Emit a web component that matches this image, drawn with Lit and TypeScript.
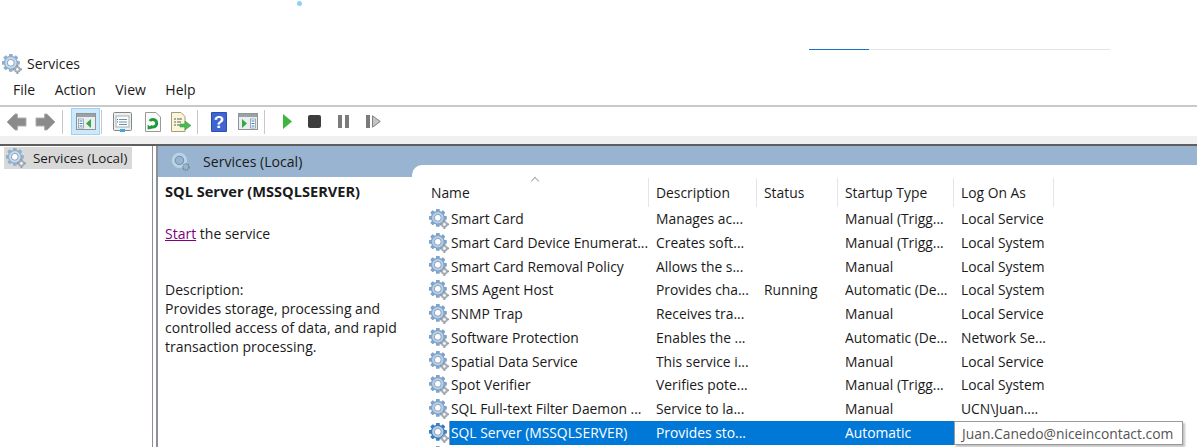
import {LitElement, html, svg, css, TemplateResult} from 'lit';
import {customElement} from 'lit/decorators.js';

const ROWS = [
  ['Smart Card', 'Manages ac...', '', 'Manual (Trigg...', 'Local Service'],
  ['Smart Card Device Enumerat...', 'Creates soft...', '', 'Manual (Trigg...', 'Local System'],
  ['Smart Card Removal Policy', 'Allows the s...', '', 'Manual', 'Local System'],
  ['SMS Agent Host', 'Provides cha...', 'Running', 'Automatic (De...', 'Local System'],
  ['SNMP Trap', 'Receives tra...', '', 'Manual', 'Local Service'],
  ['Software Protection', 'Enables the ...', '', 'Automatic (De...', 'Network Se...'],
  ['Spatial Data Service', 'This service i...', '', 'Manual', 'Local Service'],
  ['Spot Verifier', 'Verifies pote...', '', 'Manual (Trigg...', 'Local System'],
  ['SQL Full-text Filter Daemon ...', 'Service to la...', '', 'Manual', 'UCN\\Juan....'],
  ['SQL Server (MSSQLSERVER)', 'Provides sto...', '', 'Automatic', ''],
  ['', '', '', '', ''],
];

function teeth(cx: number, cy: number, r: number, w: number, n: number, color: string) {
  const out = [];
  for (let i = 0; i < n; i++) {
    const a = (360 / n) * i;
    out.push(svg`<rect x=${cx - w / 2} y=${cy - r} width=${w} height=${r * 2} rx="0.6" fill=${color} transform="rotate(${a} ${cx} ${cy})"/>`);
  }
  return out;
}

// services gear: big blue one plus a small grey one at the lower right
function gear(size: number, dark = '#7fa3c9', light = '#b9cfe6') {
  return html`<svg class="gear" width=${size} height=${size} viewBox="0 0 20 20">
    ${teeth(8.8, 8.8, 8.8, 3.4, 4, dark)}
    ${teeth(8.8, 8.8, 8.8, 3.4, 4, dark).map(t => svg`<g transform="rotate(45 8.8 8.8)">${t}</g>`)}
    <circle cx="8.8" cy="8.8" r="7" fill=${dark}/>
    <circle cx="8.8" cy="8.8" r="5.7" fill=${light}/>
    <circle cx="8.8" cy="8.8" r="3.4" fill="#fff" stroke="#6f8fb5" stroke-width="0.8"/>
    ${teeth(15.4, 15.4, 4.4, 1.6, 4, '#8a949e')}
    <circle cx="15.4" cy="15.4" r="3.2" fill="#a3adb7"/>
    <circle cx="15.4" cy="15.4" r="1.3" fill="#fff"/>
  </svg>`;
}

function paleGear(size: number) {
  return html`<svg class="gear" width=${size} height=${size} viewBox="0 0 20 20">
    <circle cx="8.4" cy="8.4" r="6.2" fill="none" stroke="#bcd3e4" stroke-width="3"/>
    <circle cx="8.4" cy="8.4" r="4.2" fill="none" stroke="#5f86ad" stroke-width="0.8"/>
    <circle cx="15" cy="15" r="3" fill="none" stroke="#72869a" stroke-width="1.6" stroke-dasharray="1.4 0.8"/>
  </svg>`;
}

const arrow = (flip: boolean) => html`<svg width="21" height="18" viewBox="0 0 21 18" style=${flip ? 'transform:scaleX(-1)' : ''}>
  <path d="M1 9 9 1h2.500V5H20v8H11.500v4H9Z" fill="#8b8b8b" stroke="#b0b0b0"/>
</svg>`;

const windowFrame = (inner: TemplateResult) => html`<svg width="20" height="17" viewBox="0 0 20 17">
  <rect x=".5" y=".5" width="19" height="16" fill="#e9eef0" stroke="#8f9596"/>
  <rect x="1" y="1" width="18" height="3" fill="#9aa2a5"/>
  ${inner}
</svg>`;

const ICONS = {
  showTree: windowFrame(html`${svg`<rect x="2.500" y="6" width="5" height="9" fill="#fff" stroke="#7b8d9c" stroke-width=".7"/><path d="M3.500 8h3M3.500 10.500h3M3.500 13h3" stroke="#3b7fc4"/><path d="M15 6v9l-5-4.500Z" fill="#35a846"/>`}`),
  showAction: windowFrame(html`${svg`<path d="M4 6v9l5-4.500Z" fill="#35a846"/><rect x="12.500" y="6" width="5" height="9" fill="#fff" stroke="#7b8d9c" stroke-width=".7"/><path d="M13.500 8h3M13.500 10.500h3M13.500 13h3" stroke="#3b7fc4"/>`}`),
  props: html`<svg width="19" height="20" viewBox="0 0 19 20">
    <rect x=".5" y=".5" width="18" height="18" rx="1" fill="#efefed" stroke="#80878b"/>
    <rect x="3" y="4" width="13" height="11" fill="#fff" stroke="#a7adb0"/>
    <path d="M6 7.500h8M6 10h8M6 12.500h8" stroke="#6b8fb0"/><path d="M4 7.500h1M4 10h1" stroke="#3c6f9c"/>
    <rect x="7" y="17" width="5" height="3" fill="#3fa9dc"/>
  </svg>`,
  refresh: html`<svg width="16" height="20" viewBox="0 0 16 20">
    <path d="M.5.500H11l4.500 4.500v14.500H.5Z" fill="#fbfbfb" stroke="#9a9a9a"/>
    <path d="M4.800 9a3.800 3.800 0 1 1 .5 5" fill="none" stroke="#1e9b3c" stroke-width="3"/>
    <path d="M2.600 12.500 7.500 16.500 2.600 17.500Z" fill="#1e9b3c"/>
  </svg>`,
  exportList: html`<svg width="20" height="20" viewBox="0 0 20 20">
    <path d="M.5.500H10l4 4v15H.5Z" fill="#fbf6d8" stroke="#a69d7c"/>
    <path d="M3 7h2M6 7h5M3 10h2M6 10h4M3 13h2M6 13h3" stroke="#55606b"/>
    <path d="M9 12h5V9l6 4.500-6 4.500v-3H9Z" fill="#4dba56" stroke="#2d9a3d" stroke-width=".5"/>
  </svg>`,
  help: html`<svg width="16" height="20" viewBox="0 0 16 20">
    <rect width="16" height="20" rx="1" fill="#2b4eb4"/><rect x="1" y="1" width="14" height="18" fill="#3f66cf"/>
    <text x="8" y="16" text-anchor="middle" font-family="Liberation Sans, sans-serif" font-weight="700" font-size="17" fill="#fff">?</text>
  </svg>`,
  play: html`<svg width="9" height="15" viewBox="0 0 9 15"><path d="M0 0 9 7.500 0 15Z" fill="#3fb63f"/></svg>`,
  stop: html`<svg width="13" height="13" viewBox="0 0 13 13"><rect width="13" height="13" rx="2" fill="#3d3d3d"/></svg>`,
  pause: html`<svg width="11" height="13" viewBox="0 0 11 13"><path d="M0 0h4v13H0ZM7 0h4v13H7Z" fill="#7b7b7b"/></svg>`,
  resume: html`<svg width="15" height="13" viewBox="0 0 15 13"><path d="M0 0h4v13H0Z" fill="#7b7b7b"/><path d="M6.500.8 14.300 6.500 6.500 12.200Z" fill="#c4c4c4" stroke="#808080"/></svg>`,
};

@customElement('app-root')
export class AppRoot extends LitElement {
  static styles = css`
    :host {
      display: block;
      position: relative;
      width: 1197px;
      height: 447px;
      overflow: hidden;
      background: #fff;
      color: #1a1a1a;
      font-family: "Open Sans", "Noto Sans", sans-serif;
      font-size: 13.85px;
    }
    .gear { display: block; flex: none; }
    .dot {
      position: absolute;
      left: 297px;
      top: 1px;
      width: 5px;
      height: 5px;
      border-radius: 50%;
      background: #8fd0f7;
    }
    .loader {
      position: absolute;
      left: 809px;
      top: 49px;
      width: 301px;
      height: 1px;
      background: #e4e4e4;
    }
    .loader div { width: 60px; height: 1px; background: #1a6fc0; }
    .title {
      display: flex;
      align-items: center;
      gap: 5px;
      height: 21px;
      margin-top: 53px;
      padding-left: 2px;
      font-size: 14px;
    }
    .menu {
      display: flex;
      height: 33px;
      align-items: center;
      padding-left: 13px;
      gap: 19.500px;
      box-sizing: border-box;
      border-bottom: 2px solid #c9c9c9;
      font-size: 14px;
    }
    .toolbar {
      display: flex;
      align-items: center;
      height: 29px;
      padding-left: 6px;
    }
    .toolbar > * { flex: none; }
    .sep { width: 1px; height: 24px; background: #c8c8c8; }
    .active {
      display: flex;
      align-items: center;
      justify-content: center;
      box-sizing: border-box;
      width: 29px;
      height: 27px;
      background: #cde8fb;
      border: 1px solid #9fd3f5;
    }
    .strip {
      height: 8px;
      background: #f0f0f0;
      border-bottom: 2px solid #5f5f5f;
    }
    .panes {
      display: grid;
      grid-template-columns: 153px 1fr;
      height: 300px;
    }
    .tree {
      box-sizing: border-box;
      border-right: 1px solid #8e8e8e;
      padding: 1px 20px 0 4px;
    }
    .node {
      display: flex;
      align-items: center;
      gap: 7px;
      height: 22px;
      padding-left: 2px;
      background: #d9d9d9;
      white-space: nowrap;
      font-size: 13.400px;
    }
    .right {
      display: grid;
      grid-template-columns: 254px 1fr;
      margin-left: 3px;
      border-left: 2px solid #8c9198;
      background: #99b4d1;
    }
    .head {
      display: flex;
      align-items: center;
      gap: 12px;
      height: 31px;
      padding-left: 13px;
      font-size: 14.100px;
    }
    .details {
      display: flex;
      flex-direction: column;
      min-width: 0;
    }
    .body {
      flex: 1;
      background: #fff;
      padding: 5px 0 0 7px;
      line-height: 19px;
      font-size: 14px;
    }
    .body h2 { margin: 0; font-size: 14.600px; font-weight: 700; line-height: 19px; }
    .body p { margin: 23px 0 0; }
    .body p + p { margin-top: 37px; }
    .body a { color: #800080; text-decoration: underline; }
    .list {
      margin-top: 19px;
      padding-top: 13px;
      background: #fff;
      border-top-left-radius: 10px;
      overflow: hidden;
      --cols: 237px 108px 81px 116px 100px;
    }
    .thead, .row {
      display: grid;
      grid-template-columns: var(--cols);
      white-space: nowrap;
    }
    .thead { height: 29px; position: relative; }
    .thead div {
      padding-left: 7px;
      border-right: 1px solid #e5e5e5;
      line-height: 29px;
    }
    .thead div:first-child { padding-left: 19px; }
    .sort {
      position: absolute;
      left: 120px;
      top: 0;
      width: 5px;
      height: 5px;
      transform: rotate(45deg);
      border-left: 1px solid #aaa;
      border-top: 1px solid #aaa;
    }
    .row { height: 23.75px; line-height: 23.75px; }
    .row > div { padding-left: 7px; overflow: hidden; }
    .row .name { display: flex; align-items: center; gap: 2px; padding-left: 17px; }
    .row.sel { color: #fff; }
    .row.sel .name span, .row.sel > div:not(.name) { background: #0078d7; }
    .row.sel .name span {
      flex: 1;
      margin-right: 0;
      box-shadow: inset 1px 0 #8f9aa5;
      padding-left: 2px;
      margin-left: -2px;
    }
    .tip {
      position: absolute;
      left: 954px;
      top: 421px;
      width: 229px;
      height: 24px;
      box-sizing: border-box;
      padding-left: 7px;
      line-height: 23px;
      background: #fff;
      border: 1px solid #9a9a9a;
      box-shadow: 2px 2px 2px rgba(0, 0, 0, 0.25);
      color: #555;
      white-space: nowrap;
    }
  `;

  protected render(): TemplateResult {
    return html`
      <div class="dot"></div>
      <div class="loader"><div></div></div>
      <div class="title">${gear(20, '#8fb0cc', '#c9dbe9')}<span>Services</span></div>
      <nav class="menu"><span>File</span><span>Action</span><span>View</span><span>Help</span></nav>
      <div class="toolbar">
        ${arrow(false)}<span style="width:8px"></span>${arrow(true)}
        <span style="width:6px"></span><div class="sep"></div><span style="width:8px"></span>
        <div class="active">${ICONS.showTree}</div>
        <span style="width:1px"></span><div class="sep"></div><span style="width:11px"></span>
        ${ICONS.props}<span style="width:13px"></span>${ICONS.refresh}<span style="width:10px"></span>${ICONS.exportList}
        <span style="width:6px"></span><div class="sep"></div><span style="width:13px"></span>
        ${ICONS.help}<span style="width:11px"></span>${ICONS.showAction}
        <span style="width:6px"></span><div class="sep"></div><span style="width:18px"></span>
        ${ICONS.play}<span style="width:16px"></span>${ICONS.stop}<span style="width:17px"></span>${ICONS.pause}<span style="width:17px"></span>${ICONS.resume}
      </div>
      <div class="strip"></div>
      <div class="panes">
        <aside class="tree"><div class="node">${gear(20, '#8fb0cc', '#c9dbe9')}<span>Services (Local)</span></div></aside>
        <section class="right">
          <div class="details">
            <div class="head">${paleGear(20)}<span>Services (Local)</span></div>
            <div class="body">
              <h2>SQL Server (MSSQLSERVER)</h2>
              <p><a>Start</a> the service</p>
              <p>Description:<br>Provides storage, processing and<br>controlled access of data, and rapid<br>transaction processing.</p>
            </div>
          </div>
          <div class="list">
            <div class="thead">
              <div>Name</div><div>Description</div><div>Status</div><div>Startup Type</div><div>Log On As</div>
              <i class="sort"></i>
            </div>
            ${ROWS.map((r, i) => html`
              <div class="row ${i === 9 ? 'sel' : ''}">
                <div class="name">${gear(20, i === 9 ? '#3a7fc1' : undefined)}<span>${r[0]}</span></div>
                <div>${r[1]}</div><div>${r[2]}</div><div>${r[3]}</div><div>${r[4]}</div>
              </div>`)}
          </div>
        </section>
      </div>
      <div class="tip">Juan.Canedo@niceincontact.com</div>
    `;
  }
}
